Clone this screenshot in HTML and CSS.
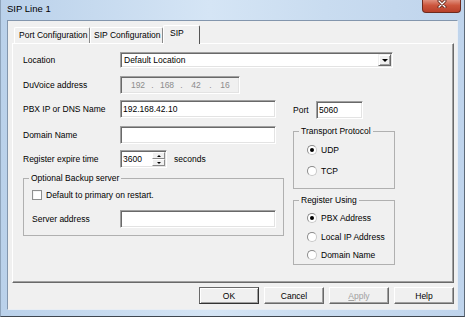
FILE: index.html
```html
<!DOCTYPE html>
<html lang="en">
<head>
  <meta charset="UTF-8">
  <title>SIP Line 1</title>
  <link rel="stylesheet" href="styles.css">
</head>
<body>

  <div class="window">
    <div class="titlebar">
      <span class="title">SIP Line 1</span>
      <div class="close">
        <svg width="10" height="8" viewBox="0 0 10 8">
          <path d="M2 1 L8 7 M8 1 L2 7" stroke="#5b2014" stroke-width="3" stroke-linecap="round"/>
          <path d="M2 1 L8 7 M8 1 L2 7" stroke="#fff" stroke-width="1.4" stroke-linecap="round"/>
        </svg>
      </div>
    </div>

    <div class="client">
      <div class="tabs">
        <div class="tab t-port">Port Configuration</div>
        <div class="tab t-sipconf">SIP Configuration</div>
        <div class="tab t-sip active">SIP</div>
      </div>

      <div class="panel">
        <div class="row row-loc">
          <span class="lbl">Location</span>
          <div class="combo">
            <span class="combo-text">Default Location</span>
            <span class="drop"><i class="tri-down"></i></span>
          </div>
        </div>

        <div class="row row-ip">
          <span class="lbl">DuVoice address</span>
          <div class="field ipbox">
            <span class="seg">192</span><span class="dot">.</span>
            <span class="seg">168</span><span class="dot">.</span>
            <span class="seg">42</span><span class="dot">.</span>
            <span class="seg">16</span>
          </div>
        </div>

        <div class="cols">
          <div class="left">
            <div class="row">
              <span class="lbl">PBX IP or DNS Name</span>
              <div class="field wide">192.168.42.10</div>
            </div>
            <div class="row row-domain">
              <span class="lbl">Domain Name</span>
              <div class="field wide"></div>
            </div>
            <div class="row row-expire">
              <span class="lbl">Register expire time</span>
              <div class="field spin">
                <span>3600</span>
                <span class="spin-btns">
                  <span class="sb"><i class="tri-up"></i></span>
                  <span class="sb"><i class="tri-down small"></i></span>
                </span>
              </div>
              <span class="unit">seconds</span>
            </div>

            <fieldset class="group backup">
              <legend>Optional Backup server</legend>
              <div class="check-row">
                <span class="checkbox"></span>
                <span class="check-label">Default to primary on restart.</span>
              </div>
              <div class="row row-server">
                <span class="lbl-server">Server address</span>
                <div class="field wide"></div>
              </div>
            </fieldset>
          </div>

          <div class="right">
            <div class="row row-port">
              <span class="lbl-port">Port</span>
              <div class="field port">5060</div>
            </div>

            <fieldset class="group transport">
              <legend>Transport Protocol</legend>
              <div class="radio-row"><span class="radio on"></span><span>UDP</span></div>
              <div class="radio-row r2"><span class="radio"></span><span>TCP</span></div>
            </fieldset>

            <fieldset class="group register">
              <legend>Register Using</legend>
              <div class="radio-row"><span class="radio on"></span><span>PBX Address</span></div>
              <div class="radio-row r2"><span class="radio"></span><span>Local IP Address</span></div>
              <div class="radio-row r3"><span class="radio"></span><span>Domain Name</span></div>
            </fieldset>
          </div>
        </div>
      </div>

      <div class="buttons">
        <div class="btn default">OK</div>
        <div class="btn">Cancel</div>
        <div class="btn disabled"><span><u>A</u>pply</span></div>
        <div class="btn">Help</div>
      </div>
    </div>
  </div>

</body>
</html>
```

FILE: styles.css
```css
* { margin: 0; padding: 0; box-sizing: border-box; }
body {
  width: 465px;
  height: 317px;
  overflow: hidden;
  font-family: "Liberation Sans", Arial, sans-serif;
  font-size: 8.5px;
  color: #000;
  background: #fff;
}

/* window frame */
.window {
  width: 465px;
  height: 317px;
  display: flex;
  flex-direction: column;
  padding: 0 6px 6px 6px;
  border: 1px solid;
  border-top: 0;
  border-color: #8fa4bb #5d6a78 #3f4750 #8fa4bb;
  background: linear-gradient(to right, #bad1ea, #d5e5f5 45%, #c9dcf0 70%, #bfd4ec);
}
.titlebar {
  height: 20px;
  display: flex;
  align-items: flex-start;
  justify-content: space-between;
}
.title { font-size: 9.5px; line-height: 10px; padding-top: 4px; }
.close {
  width: 39px;
  height: 13px;
  margin-right: -3px;
  display: flex;
  justify-content: center;
  background: linear-gradient(#e0907e, #cc563d 45%, #b8402a);
  border: 1px solid #6e2a1e;
  border-top: 0;
  border-radius: 0 0 4px 4px;
}

.client {
  flex: 1;
  display: flex;
  flex-direction: column;
  background: #f0f0f0;
  border: 1px solid;
  border-color: #8396ad #e9eef4 #e9eef4 #8396ad;
  padding: 4px 3px 0 4px;
}

/* tabs */
.tabs { display: flex; align-items: flex-end; height: 18px; padding-left: 2px; }
.tab {
  height: 16px;
  line-height: 15px;
  padding-left: 3px;
  border: 1px solid;
  border-bottom: 0;
  border-color: #fff #8a8a8a #fff #fff;
  border-radius: 2px 2px 0 0;
  white-space: nowrap;
  background: #f0f0f0;
}
.t-port { width: 76px; padding-left: 4px; }
.t-sipconf { width: 73px; }
.t-sip { width: 37px; }
.tab.active {
  position: relative;
  height: 19px;
  margin-bottom: -1px;
  padding-left: 6px;
  line-height: 15px;
  border-right-color: #555;
}

.panel {
  height: 240px;
  border: 1px solid;
  border-color: #fff #696969 #696969 #fff;
  box-shadow: inset -1px -1px 0 #a0a0a0;
  padding: 8px 0 0 10px;
}

/* rows and fields */
.row { display: flex; align-items: center; height: 18px; }
.lbl { width: 97px; white-space: nowrap; }
.row-loc { height: 16px; }
.row-ip { margin-top: 8px; }
.row-domain { margin-top: 8px; }
.row-expire { margin-top: 6px; }

.field {
  height: 18px;
  display: flex;
  align-items: center;
  padding-left: 2px;
  background: #fff;
  border: 1px solid;
  border-color: #a0a0a0 #fff #fff #a0a0a0;
  box-shadow: inset 1px 1px 0 #696969, inset -1px -1px 0 #e3e3e3;
}
.wide { width: 156px; }
.port { width: 47px; }

.combo {
  width: 273px;
  height: 16px;
  display: flex;
  align-items: center;
  background: #fff;
  border: 1px solid;
  border-color: #a0a0a0 #fff #fff #a0a0a0;
  box-shadow: inset 1px 1px 0 #696969, inset -1px -1px 0 #e3e3e3;
  padding: 1px 1px 1px 3px;
}
.combo-text { flex: 1; }
.drop {
  width: 13px;
  height: 12px;
  display: flex;
  align-items: center;
  justify-content: center;
  background: #f0f0f0;
  border: 1px solid;
  border-color: #f0f0f0 #696969 #696969 #f0f0f0;
  box-shadow: inset 1px 1px 0 #fff, inset -1px -1px 0 #a0a0a0;
}
.tri-down {
  width: 0;
  height: 0;
  border-left: 3px solid transparent;
  border-right: 3px solid transparent;
  border-top: 3px solid #000;
}
.tri-down.small { border-left-width: 2px; border-right-width: 2px; border-top-width: 2px; }
.tri-up {
  width: 0;
  height: 0;
  border-left: 2px solid transparent;
  border-right: 2px solid transparent;
  border-bottom: 2px solid #000;
}

.ipbox {
  width: 120px;
  background: #f0f0f0;
  color: #8c8c8c;
  padding-left: 6px;
}
.seg { width: 22px; text-align: center; }
.dot { width: 7px; text-align: center; }

.spin { width: 47px; padding-right: 1px; }
.spin-btns {
  margin-left: auto;
  width: 13px;
  height: 14px;
  display: flex;
  flex-direction: column;
}
.sb {
  flex: 1;
  display: flex;
  align-items: center;
  justify-content: center;
  background: #f0f0f0;
  border: 1px solid;
  border-color: #fff #8a8a8a #8a8a8a #fff;
}
.unit { margin-left: 7px; }

/* two column block */
.cols { display: flex; gap: 9px; margin-top: 6px; }
.left { width: 261px; }
.right { width: 102px; }

.group {
  border: 1px solid #b0b0b0;
  min-width: 0;
}
.group legend { padding: 0 2px; line-height: 11px; }

.backup { margin-top: 5px; padding: 5px 0 7px 8px; }
.backup legend { margin-left: -3px; }
.check-row { display: flex; align-items: center; height: 11px; }
.checkbox {
  width: 10px;
  height: 10px;
  background: #fff;
  border: 1px solid #8e8f8f;
  box-shadow: inset 1px 1px 0 #f4f4f4;
}
.check-label { margin-left: 4px; }
.row-server { margin-top: 10px; }
.lbl-server { width: 88px; }

.row-port { margin-top: 1px; }
.lbl-port { width: 23px; }

.transport { margin-top: 7px; padding: 7px 0 11px 13px; }
.register { margin-top: 6px; padding: 6px 0 3px 13px; }
.transport legend, .register legend { margin-left: -8px; }
.radio-row { display: flex; align-items: center; height: 12px; gap: 4px; }
.transport .r2 { margin-top: 9px; }
.register .r2 { margin-top: 7px; }
.register .r3 { margin-top: 6px; }
.radio {
  width: 10px;
  height: 10px;
  border-radius: 50%;
  background: #fff;
  border: 1px solid;
  border-color: #8a8a8a #c8c8c8 #c8c8c8 #8a8a8a;
  display: flex;
  align-items: center;
  justify-content: center;
}
.radio.on::after {
  content: "";
  width: 4px;
  height: 4px;
  border-radius: 50%;
  background: #000;
}

/* dialog buttons */
.buttons { display: flex; justify-content: flex-end; gap: 5px; margin-top: 4px; }
.btn {
  width: 60px;
  height: 17px;
  display: flex;
  align-items: center;
  justify-content: center;
  background: #f0f0f0;
  border: 1px solid;
  border-color: #fff #696969 #696969 #fff;
  box-shadow: inset -1px -1px 0 #a0a0a0;
}
.btn.default {
  border-color: #696969 #333 #333 #696969;
  box-shadow: inset 1px 1px 0 #fff, inset -1px -1px 0 #a0a0a0;
}
.btn.disabled { color: #a0a0a0; }
```
